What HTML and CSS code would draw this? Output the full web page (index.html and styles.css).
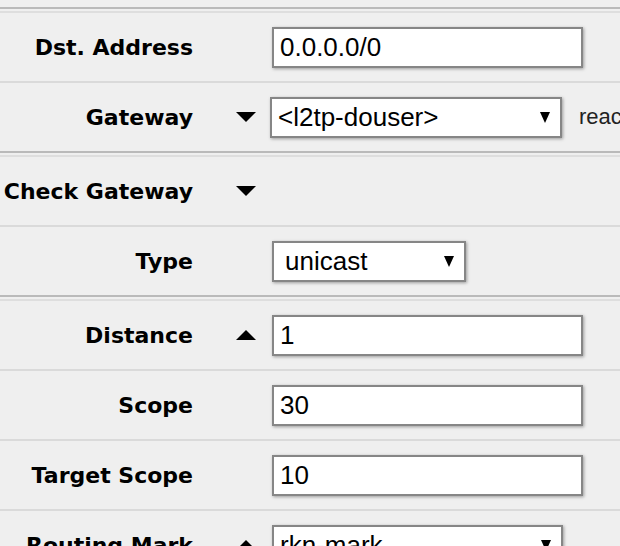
FILE: index.html
```html
<!DOCTYPE html>
<html lang="en">
<head>
<meta charset="UTF-8" />
<title>Route</title>
<link rel="stylesheet" href="styles.css">
</head>
<body>
<div class="form">

  <div class="section">
    <div class="section-body">
      <div class="row">
        <div class="label">Dst. Address</div>
        <span class="toggle"></span>
        <input class="field wide" type="text" value="0.0.0.0/0">
      </div>
      <div class="row">
        <div class="label">Gateway</div>
        <span class="toggle">
          <svg width="20" height="10" viewBox="0 0 20 10"><polygon points="0,0 20,0 10,10" fill="#000"/></svg>
        </span>
        <div class="field select gw">
          <span>&lt;l2tp-douser&gt;</span>
          <svg class="arrow" width="10" height="11" viewBox="0 0 10 11"><polygon points="0,0 10,0 5,11" fill="#000"/></svg>
        </div>
        <span class="note">reachable</span>
      </div>
    </div>
  </div>

  <div class="section">
    <div class="section-body">
      <div class="row">
        <div class="label">Check Gateway</div>
        <span class="toggle">
          <svg width="20" height="10" viewBox="0 0 20 10"><polygon points="0,0 20,0 10,10" fill="#000"/></svg>
        </span>
      </div>
      <div class="row">
        <div class="label">Type</div>
        <span class="toggle"></span>
        <div class="field select short">
          <span>unicast</span>
          <svg class="arrow" width="10" height="11" viewBox="0 0 10 11"><polygon points="0,0 10,0 5,11" fill="#000"/></svg>
        </div>
      </div>
    </div>
  </div>

  <div class="section">
    <div class="section-body">
      <div class="row">
        <div class="label">Distance</div>
        <span class="toggle">
          <svg width="20" height="10" viewBox="0 0 20 10"><polygon points="0,10 20,10 10,0" fill="#000"/></svg>
        </span>
        <input class="field wide" type="text" value="1">
      </div>
      <div class="row">
        <div class="label">Scope</div>
        <span class="toggle"></span>
        <input class="field wide" type="text" value="30">
      </div>
      <div class="row">
        <div class="label">Target Scope</div>
        <span class="toggle"></span>
        <input class="field wide" type="text" value="10">
      </div>
      <div class="row">
        <div class="label">Routing Mark</div>
        <span class="toggle">
          <svg width="20" height="10" viewBox="0 0 20 10"><polygon points="0,10 20,10 10,0" fill="#000"/></svg>
        </span>
        <div class="field select mark">
          <span>rkn-mark</span>
          <svg class="arrow" width="10" height="11" viewBox="0 0 10 11"><polygon points="0,0 10,0 5,11" fill="#000"/></svg>
        </div>
      </div>
    </div>
  </div>

</div>
</body>
</html>
```

FILE: styles.css
```css
* {
  box-sizing: border-box;
}
html, body {
  margin: 0;
  padding: 0;
  overflow: hidden;
  background: #efefef;
}
body {
  padding-top: 7px;
  font-family: "DejaVu Sans", Verdana, sans-serif;
  color: #000;
}

/* section separators: dark line, gap, light line */
.section {
  border-top: 2px solid #bababa;
  padding-top: 2px;
}
.section-body {
  border-top: 2px solid #dedede;
}

.row {
  display: flex;
  align-items: center;
  height: 68px;
  white-space: nowrap;
}
.row + .row {
  border-top: 2px solid #dadada;
  height: 70px;
}

.label {
  width: 193px;
  flex: none;
  text-align: right;
  font-weight: bold;
  font-size: 22px;
}
.toggle {
  width: 79px;
  flex: none;
  padding-left: 43px;
  display: flex;
  align-items: center;
}

.field {
  flex: none;
  height: 41px;
  background: #fff;
  border: 2px solid #868686;
  box-shadow: 1px 1px 3px rgba(0, 0, 0, 0.35);
  font-family: "Liberation Sans", Arial, sans-serif;
  font-size: 26px;
  color: #000;
  padding: 0 6px;
  outline: none;
  margin: 0;
}
.wide {
  width: 311px;
}
.select {
  display: flex;
  align-items: center;
  justify-content: space-between;
  padding: 0 10px 0 6px;
}
.gw {
  width: 292px;
  margin-left: -2px;
}
.short {
  width: 194px;
  padding-left: 11px;
}
.mark {
  width: 291px;
}
.arrow {
  flex: none;
}
.note {
  margin-left: 17px;
  font-family: "Liberation Sans", Arial, sans-serif;
  font-size: 22px;
  color: #222;
}
```
